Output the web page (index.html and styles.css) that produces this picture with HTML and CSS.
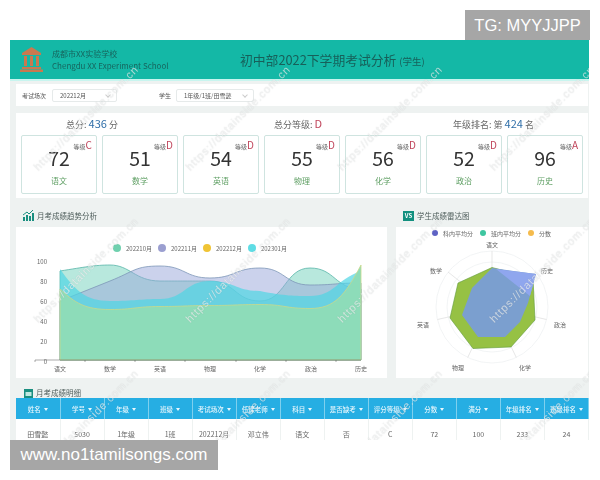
FILE: index.html
```html
<!DOCTYPE html>
<html>
<head>
    <meta charset="utf-8">
    <title>考试分析</title>
    <link rel="stylesheet" href="styles.css">
</head>
<body>
    <div class="tag tag-top">TG: MYYJJPP</div>

    <div class="dashboard">
        <header class="top-bar">
            <svg class="logo" width="23" height="25" viewBox="0 0 23 25">
                <path d="M11.5 0 L21 6 L21 8 L2 8 L2 6 Z" fill="#c9794f"/>
                <rect x="4" y="9" width="3" height="10" fill="#c9794f"/>
                <rect x="10" y="9" width="3" height="10" fill="#c9794f"/>
                <rect x="16" y="9" width="3" height="10" fill="#c9794f"/>
                <rect x="2" y="20" width="19" height="2" fill="#c9794f"/>
                <rect x="0" y="22.5" width="23" height="2.5" fill="#c9794f"/>
            </svg>
            <div class="school">
                <div>成都市XX实验学校</div>
                <div>Chengdu XX Experiment School</div>
            </div>
            <h1 class="page-title">初中部2022下学期考试分析 <small>(学生)</small></h1>
        </header>

        <div class="filters">
            <span class="filter-label">考试场次</span>
            <span class="select select-exam">202212月</span>
            <span class="filter-label label-student">学生</span>
            <span class="select select-student">1年级/1班/田雪懿</span>
        </div>

        <section class="scores">
            <div class="summary">
                <div>总分: <b class="blue">436</b> 分</div>
                <div>总分等级: <b class="red">D</b></div>
                <div>年级排名: 第 <b class="blue">424</b> 名</div>
            </div>
            <div class="cards">
                <div class="card"><div class="grade">等级<b>C</b></div><div class="num">72</div><div class="subject">语文</div></div>
                <div class="card"><div class="grade">等级<b>D</b></div><div class="num">51</div><div class="subject">数学</div></div>
                <div class="card"><div class="grade">等级<b>D</b></div><div class="num">54</div><div class="subject">英语</div></div>
                <div class="card"><div class="grade">等级<b>D</b></div><div class="num">55</div><div class="subject">物理</div></div>
                <div class="card"><div class="grade">等级<b>D</b></div><div class="num">56</div><div class="subject">化学</div></div>
                <div class="card"><div class="grade">等级<b>D</b></div><div class="num">52</div><div class="subject">政治</div></div>
                <div class="card"><div class="grade">等级<b>A</b></div><div class="num">96</div><div class="subject">历史</div></div>
            </div>
        </section>

        <div class="charts">
            <section>
                <h2 class="section-title">
                    <svg width="11" height="11" viewBox="0 0 11 11">
                        <path d="M0 5 L4 2 L6 4 L10 0" fill="none" stroke="#1a8f80" stroke-width="1"/>
                        <rect x="0" y="7" width="2" height="4" fill="#1a8f80"/>
                        <rect x="3" y="5" width="2" height="6" fill="#1a8f80"/>
                        <rect x="6" y="6" width="2" height="5" fill="#1a8f80"/>
                        <rect x="9" y="3" width="2" height="8" fill="#1a8f80"/>
                    </svg>
                    月考成绩趋势分析
                </h2>
                <div class="chart-box">
                    <div class="legend legend-line">
                        <span><i class="dot c-green"></i>202210月</span>
                        <span><i class="dot c-purple"></i>202211月</span>
                        <span><i class="dot c-yellow"></i>202212月</span>
                        <span><i class="dot c-cyan"></i>202301月</span>
                    </div>
                    <svg class="line-chart" width="371" height="123" viewBox="16 255 371 123">
                        <g class="axis-text" text-anchor="end">
                            <text x="47" y="264">100</text>
                            <text x="47" y="284">80</text>
                            <text x="47" y="304">60</text>
                            <text x="47" y="324">40</text>
                            <text x="47" y="344">20</text>
                            <text x="47" y="364">0</text>
                        </g>
                        <!-- 202210月 -->
                        <path d="M60 271 C85 267 95 265 110 265 C130 265 135 281 160 281 C185 281 185 281 210 281 C235 281 235 301 260 301 C285 301 285 268 310 268 C335 268 335 289 361 289 L361 360 L60 360 Z" fill="#62cdb4" fill-opacity=".45" stroke="#58b5a8" stroke-width=".8"/>
                        <!-- 202211月 -->
                        <path d="M60 301 L110 281 C135 271 135 266 160 266 C185 266 185 278 210 278 C235 278 235 268 260 268 C285 268 285 285 310 285 C335 285 335 283 361 283 L361 360 L60 360 Z" fill="#97a6da" fill-opacity=".5" stroke="#7d97b8" stroke-width=".8"/>
                        <!-- 202301月 -->
                        <path d="M60 269 C75 290 85 301 110 301 C135 301 140 299 160 299 C185 299 185 281 210 281 C235 281 235 291 260 291 C285 296 295 296 310 296 C335 296 335 280 361 271 L361 360 L60 360 Z" fill="#4fd6e4" fill-opacity=".7"/>
                        <!-- 202212月 -->
                        <path d="M60 289 C75 303 85 309.5 110 309.5 C135 309.5 135 306.5 160 306.5 C185 306.5 185 305.5 210 305.5 C235 305.5 235 304.5 260 304.5 C285 304.5 285 308.5 310 308.5 C335 308.5 345 295 361 265 L361 360 L60 360 Z" fill="#8ddcb9" stroke="#c9d98a" stroke-width=".8"/>
                        <path d="M35 360 H361 M35 360 V362 M85 360 V362 M135 360 V362 M185 360 V362 M236 360 V362 M286 360 V362 M336 360 V362" stroke="#555" stroke-width=".5" fill="none"/>
                        <g class="axis-text" text-anchor="middle">
                            <text x="60" y="371">语文</text>
                            <text x="110" y="371">数学</text>
                            <text x="160" y="371">英语</text>
                            <text x="210" y="371">物理</text>
                            <text x="260" y="371">化学</text>
                            <text x="311" y="371">政治</text>
                            <text x="361" y="371">历史</text>
                        </g>
                    </svg>
                </div>
            </section>
            <section>
                <h2 class="section-title">
                    <span class="vs-icon">VS</span>
                    学生成绩雷达图
                </h2>
                <div class="chart-box">
                    <div class="legend legend-radar">
                        <span><i class="dot c-indigo"></i>科内平均分</span>
                        <span><i class="dot c-teal"></i>班内平均分</span>
                        <span><i class="dot c-orange"></i>分数</span>
                    </div>
                    <svg class="radar-chart" width="192" height="139" viewBox="396 239 192 139">
                        <g fill="none" stroke="#eceff0" stroke-width=".7">
                            <circle cx="492" cy="307" r="56"/>
                            <circle cx="492" cy="307" r="45"/>
                            <circle cx="492" cy="307" r="34"/>
                            <path d="M492 307 V251 M492 307 L536 272 M492 307 L546.500 319.500 M492 307 L516.300 357.500 M492 307 L467.700 357.500 M492 307 L437.500 319.500 M492 307 L448 272" stroke="#ddd"/>
                        </g>
                        <polygon points="492,267.500 533,278 535,320 511,347 473,348.500 450,318 458,283" fill="#96c144" stroke="#5f9a3c" stroke-width=".6"/>
                        <polygon points="492,268 536,274 528,303 520,322 505,337 478,337 462,315 472,288" fill="#7b9fcf"/>
                        <polygon points="496,269 536,274 530,296" fill="#8fa6ee"/>
                        <g class="axis-text" text-anchor="middle">
                            <text x="492" y="247">语文</text>
                            <text x="547" y="273">历史</text>
                            <text x="560" y="327">政治</text>
                            <text x="525" y="370">化学</text>
                            <text x="458" y="370">物理</text>
                            <text x="423" y="327">英语</text>
                            <text x="436" y="273">数学</text>
                        </g>
                    </svg>
                </div>
            </section>
        </div>

        <h2 class="section-title table-title">
            <svg width="9" height="9" viewBox="0 0 9 9">
                <rect width="9" height="9" fill="#1a8f80"/>
                <rect x="1.500" y="3" width="6" height="4" fill="#bfe8e0"/>
            </svg>
            月考成绩明细
        </h2>
        <table class="detail">
            <thead>
                <tr>
                    <th>姓名</th><th>学号</th><th>年级</th><th>班级</th><th>考试场次</th><th>任课老师</th><th>科目</th>
                    <th>是否缺考</th><th>评分等级</th><th>分数</th><th>满分</th><th>年级排名</th><th>班级排名</th>
                </tr>
            </thead>
            <tbody>
                <tr>
                    <td>田雪懿</td><td>5030</td><td>1年级</td><td>1班</td><td>202212月</td><td>邓立伟</td><td>语文</td>
                    <td>否</td><td>C</td><td>72</td><td>100</td><td>233</td><td>24</td>
                </tr>
            </tbody>
        </table>

        <div class="marks">
            <span>https://datainside.com.cn</span><span>https://datainside.com.cn</span><span>https://datainside.com.cn</span><span>https://datainside.com.cn</span>
            <span>https://datainside.com.cn</span><span>https://datainside.com.cn</span><span>https://datainside.com.cn</span><span>https://datainside.com.cn</span>
            <span>https://datainside.com.cn</span><span>https://datainside.com.cn</span><span>https://datainside.com.cn</span><span>https://datainside.com.cn</span>
        </div>
    </div>

    <div class="tag tag-bottom">www.no1tamilsongs.com</div>
</body>
</html>
```

FILE: styles.css
```css
html, body {
    margin: 0;
    height: 480px;
    overflow: hidden;
    background: #fff;
    font-family: "Noto Sans CJK SC", "Noto Sans", sans-serif;
}
.tag {
    position: absolute;
    height: 30px;
    line-height: 30px;
    background: #a6a6a6;
    color: #fff;
    font-family: "Liberation Sans", sans-serif;
    font-size: 16.500px;
    text-align: center;
    z-index: 2;
}
.tag-top {
    top: 10px;
    left: 465px;
    width: 125px;
}
.tag-bottom {
    top: 440px;
    left: 10px;
    width: 208px;
    font-size: 17px;
}
.dashboard {
    position: relative;
    margin: 40px 0 0 10px;
    width: 579px;
    height: 400px;
    overflow: hidden;
    background: #eef2f1;
    filter: blur(.5px);
}
.top-bar {
    display: flex;
    align-items: center;
    height: 39px;
    background: #14b8a6;
    border-bottom: 2px solid #c8f5ef;
    padding-left: 10px;
}
.logo {
    flex: none;
}
.school {
    margin-left: 9px;
    width: 139px;
    font-size: 8px;
    line-height: 12px;
    color: #17665f;
    white-space: nowrap;
}
.page-title {
    margin: 0 0 0 49px;
    font-size: 12.800px;
    font-weight: 400;
    color: #17605a;
    white-space: nowrap;
}
.page-title small {
    font-size: 9.500px;
}
.filters {
    display: flex;
    align-items: center;
    height: 22px;
    margin: 3px 1px 0 6px;
    background: #fff;
    padding-left: 6px;
    font-size: 6px;
    color: #555;
}
.select {
    position: relative;
    box-sizing: border-box;
    height: 13px;
    line-height: 11px;
    border: 1px solid #e6eaea;
    border-radius: 2px;
    padding-left: 7px;
    font-size: 6px;
}
.select::after {
    content: "";
    position: absolute;
    top: 3px;
    right: 6px;
    width: 3px;
    height: 3px;
    border-right: 1px solid #ccc;
    border-bottom: 1px solid #ccc;
    transform: rotate(45deg);
}
.select-exam {
    width: 65px;
    margin-left: 6px;
}
.label-student {
    margin-left: 42px;
}
.select-student {
    width: 78px;
    margin-left: 5px;
}
.scores {
    margin: 7px 1px 0 6px;
    height: 85px;
    background: #fff;
}
.summary {
    display: grid;
    grid-template-columns: 208px 179px 1fr;
    height: 22px;
    padding: 0 0 2px 50px;
    box-sizing: border-box;
    align-items: center;
    font-size: 9px;
    color: #666;
}
.summary b {
    font-size: 11px;
    font-weight: 400;
}
.blue {
    color: #2f6ea8;
}
.red {
    color: #c0465c;
}
.cards {
    display: grid;
    grid-template-columns: repeat(7, 76px);
    gap: 5px;
    padding: 0 5px;
}
.card {
    position: relative;
    box-sizing: border-box;
    height: 59px;
    border: 1px solid #cfe4e0;
    border-radius: 2px;
    text-align: center;
}
.grade {
    position: absolute;
    top: 1px;
    right: 4px;
    font-size: 6px;
    color: #666;
}
.grade b {
    font-size: 10px;
    font-weight: 400;
    color: #c0465c;
}
.num {
    margin-top: 8px;
    height: 28px;
    line-height: 28px;
    font-size: 19.500px;
    color: #333;
}
.subject {
    margin-top: 3px;
    font-size: 8px;
    line-height: 12px;
    color: #5d9e62;
}
.charts {
    display: grid;
    grid-template-columns: 371px 192px;
    gap: 9px;
    margin-left: 6px;
}
.section-title {
    display: flex;
    align-items: center;
    gap: 3px;
    height: 29px;
    box-sizing: border-box;
    margin: 0;
    padding: 6px 0 0 7px;
    font-size: 7.500px;
    font-weight: 400;
    color: #4d5c5a;
}
.vs-icon {
    width: 11px;
    height: 10px;
    line-height: 10px;
    background: #12907f;
    color: #fff;
    font-size: 6px;
    font-weight: 700;
    text-align: center;
}
.chart-box {
    height: 151px;
    background: #fff;
}
.legend {
    display: flex;
    align-items: center;
    font-size: 6px;
    color: #666;
    white-space: nowrap;
}
.legend span {
    display: flex;
    align-items: center;
}
.dot {
    display: inline-block;
    border-radius: 50%;
}
.legend-line {
    height: 12px;
    padding: 15px 0 1px 97px;
    gap: 6px;
}
.legend-line .dot {
    width: 8px;
    height: 8px;
    margin-right: 5px;
}
.legend-radar {
    height: 12px;
    padding-left: 36px;
    gap: 7px;
}
.legend-radar .dot {
    width: 6px;
    height: 6px;
    margin-right: 5px;
}
.c-green { background: #6fd0ae; }
.c-purple { background: #9b9fd0; }
.c-yellow { background: #f0c435; }
.c-cyan { background: #5fdde5; }
.c-indigo { background: #5e62c4; }
.c-teal { background: #3ec6a0; }
.c-orange { background: #f5bb4d; }
.line-chart, .radar-chart {
    display: block;
}
.axis-text {
    font-size: 6px;
    fill: #666;
}
.table-title {
    height: 20px;
    padding: 0 0 0 14px;
    align-items: flex-end;
}
.detail {
    width: 573px;
    margin-left: 6px;
    table-layout: fixed;
    border-collapse: collapse;
    background: #fff;
    font-size: 7px;
    color: #666;
}
.detail th {
    height: 21px;
    padding: 0;
    background: #26aee3;
    border-right: 1px solid #7fd0ee;
    color: #e8f7fd;
    font-size: 6.500px;
    font-weight: 500;
    white-space: nowrap;
}
.detail th::after {
    content: "";
    display: inline-block;
    margin-left: 3px;
    vertical-align: middle;
    border-left: 2.500px solid transparent;
    border-right: 2.500px solid transparent;
    border-top: 3px solid #e8f7fd;
}
.detail td {
    height: 21px;
    padding: 4px 0 0;
    border-right: 1px solid #eef2f1;
    text-align: center;
    white-space: nowrap;
}
.marks {
    position: absolute;
    top: 120px;
    left: 31px;
    display: grid;
    grid-template-columns: repeat(4, 152px);
    grid-auto-rows: 152px;
    pointer-events: none;
}
.marks span {
    display: block;
    width: 160px;
    height: 14px;
    transform-origin: 0 100%;
    transform: rotate(-45deg);
    font-family: "Liberation Sans", sans-serif;
    font-size: 11px;
    letter-spacing: .85px;
    white-space: nowrap;
    color: rgba(255, 255, 255, .6);
    text-shadow: 0 0 1px rgba(120, 130, 130, .35);
}
```
